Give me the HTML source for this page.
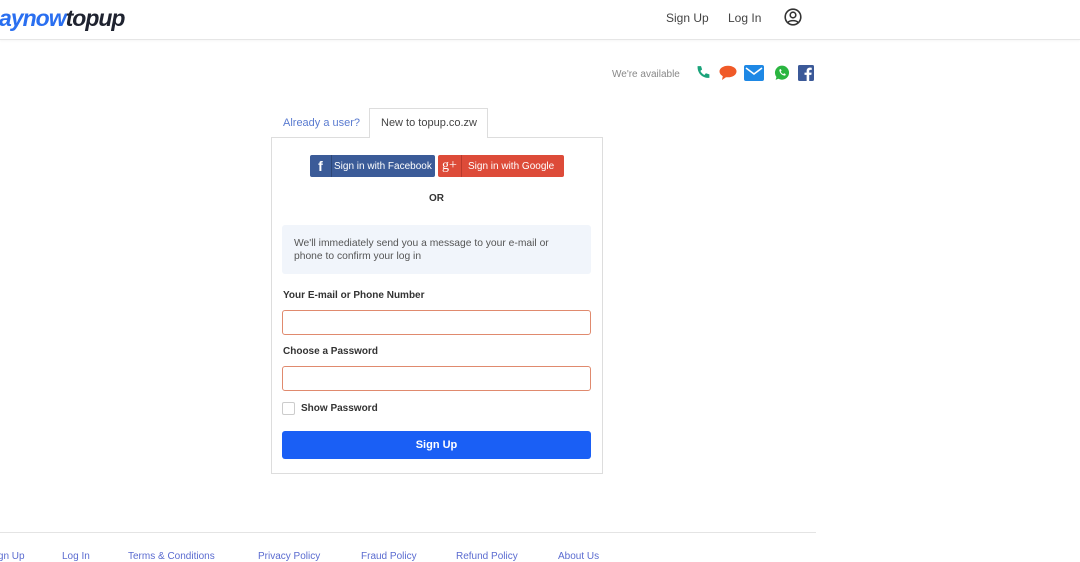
<!DOCTYPE html>
<html><head><meta charset="utf-8"><style>
*{box-sizing:border-box;margin:0;padding:0}
body{width:1080px;height:559px;overflow:hidden;background:#fff;font-family:"Liberation Sans",sans-serif;position:relative;color:#333}
.abs{position:absolute}
.hdr{left:0;top:0;width:1080px;height:40px;border-bottom:1px solid #e6e6e6;box-shadow:0 1px 2px rgba(0,0,0,.04)}
.logo{left:-14px;top:5px;font-size:23px;font-weight:bold;font-style:italic;letter-spacing:-1px}
.nav{top:11px;font-size:12px;color:#444}
.avail{left:612px;top:69px;font-size:10px;color:#888}
.tab{font-size:11px}
.box{left:271px;top:137px;width:332px;height:337px;border:1px solid #ddd}
.btn{height:22px;border-radius:2px;color:#fff;font-size:10px;white-space:nowrap;display:flex;align-items:stretch}
.btn .ic{display:flex;align-items:center;justify-content:center}
.btn .tx{display:flex;align-items:center}
.lbl{left:283px;font-size:10px;font-weight:bold;color:#333}
.inp{left:282px;width:309px;height:25px;border:1px solid #e08a6e;border-radius:3px}
.foot{top:551px;font-size:10px;color:#5a6bd0}
</style></head><body>
<div class="abs hdr"></div>
<div class="abs logo"><span style="color:#2a6ff0">paynow</span><span style="color:#1f2330">topup</span></div>
<div class="abs nav" style="left:666px">Sign Up</div>
<div class="abs nav" style="left:728px">Log In</div>
<svg class="abs" style="left:784px;top:8px" width="18" height="18" viewBox="0 0 18 18" fill="none" stroke="#333" stroke-width="1.6"><circle cx="9" cy="9" r="7.8"/><circle cx="9" cy="7" r="2.8"/><path d="M4 14.5c1.5-2.5 8.5-2.5 10 0"/></svg>
<div class="abs avail">We're available</div>
<svg class="abs" style="left:696px;top:65px" width="15" height="15" viewBox="0 0 14 14"><path d="M1.5 1l3.2 0 1 3.2-1.6 1.3c.8 1.8 2 3 3.8 3.8L9.2 7.7l3.3 1v3.3c-6.5.5-11.5-4.5-11-11z" fill="#1aa37a"/></svg>
<svg class="abs" style="left:719px;top:65px" width="18" height="16" viewBox="0 0 18 16"><ellipse cx="9" cy="6.5" rx="8.5" ry="5.8" fill="#f05a28"/><path d="M4 10l-1 5 5-3.5z" fill="#f05a28"/></svg>
<svg class="abs" style="left:744px;top:65px" width="20" height="16" viewBox="0 0 20 16"><rect width="20" height="16" rx="2" fill="#1e88e5"/><path d="M2 3l8 6 8-6" stroke="#fff" stroke-width="1.6" fill="none"/></svg>
<svg class="abs" style="left:774px;top:65px" width="16" height="16" viewBox="0 0 15 15"><circle cx="7.5" cy="7.2" r="6.6" fill="#2ab540"/><path d="M1.5 14l1-3.5 2.5 2z" fill="#2ab540"/><path d="M5 4.5c0 3 2.5 5.5 5.5 5.5l.5-1.5-1.5-.8-.8.8C7.5 8 6.8 7.3 6.3 6.2l.8-.8-.7-1.6z" fill="#fff"/></svg>
<svg class="abs" style="left:798px;top:65px" width="16" height="16" viewBox="0 0 15 15"><rect width="15" height="15" rx="1.5" fill="#3b5998"/><path d="M10.5 15V9.3h2l.3-2.2h-2.3V5.7c0-.6.2-1.1 1.1-1.1h1.3V2.6c-.3 0-1-.1-1.8-.1-1.8 0-3 1.1-3 3.1v1.5H6.1v2.2h2V15z" fill="#fff"/></svg>
<div class="abs tab" style="left:283px;top:117px;color:#5a7bd0">Already a user?</div>
<div class="abs" style="left:369px;top:108px;width:119px;height:30px;border:1px solid #ddd;border-bottom:none;background:#fff;z-index:2"></div>
<div class="abs tab" style="left:381px;top:117px;color:#444;z-index:3">New to topup.co.zw</div>
<div class="abs box"></div>
<div class="abs btn" style="left:310px;top:155px;width:125px;background:#3b5b98"><span class="ic" style="width:22px;font-weight:bold;font-size:14px;border-right:1px solid #2d4777">f</span><span class="tx" style="padding-left:2px">Sign in with Facebook</span></div>
<div class="abs btn" style="left:438px;top:155px;width:126px;background:#dd4b39"><span class="ic" style="width:24px;font-family:'Liberation Serif',serif;font-size:14px;border-right:1px solid #b93a2b">g+</span><span class="tx" style="padding-left:6px">Sign in with Google</span></div>
<div class="abs" style="left:429px;top:193px;font-size:10px;font-weight:bold;color:#333">OR</div>
<div class="abs" style="left:282px;top:225px;width:309px;height:49px;background:#f1f5fb;border-radius:3px;padding:12px 30px 12px 12px;font-size:10.3px;line-height:13px;color:#555">We'll immediately send you a message to your e-mail or phone to confirm your log in</div>
<div class="abs lbl" style="top:290px">Your E-mail or Phone Number</div>
<div class="abs inp" style="top:310px"></div>
<div class="abs lbl" style="top:346px">Choose a Password</div>
<div class="abs inp" style="top:366px"></div>
<div class="abs" style="left:282px;top:402px;width:13px;height:13px;border:1px solid #ccc;border-radius:2px"></div>
<div class="abs lbl" style="left:301px;top:403px">Show Password</div>
<div class="abs" style="left:282px;top:431px;width:309px;height:28px;background:#1a5ff5;border-radius:3px;color:#fff;font-size:11px;font-weight:bold;text-align:center;line-height:28px">Sign Up</div>
<div class="abs" style="left:0;top:532px;width:816px;border-top:1px solid #e4e4e4"></div>
<div class="abs foot" style="left:-11px">Sign Up</div>
<div class="abs foot" style="left:62px">Log In</div>
<div class="abs foot" style="left:128px">Terms &amp; Conditions</div>
<div class="abs foot" style="left:258px">Privacy Policy</div>
<div class="abs foot" style="left:361px">Fraud Policy</div>
<div class="abs foot" style="left:456px">Refund Policy</div>
<div class="abs foot" style="left:558px">About Us</div>
</body></html>
